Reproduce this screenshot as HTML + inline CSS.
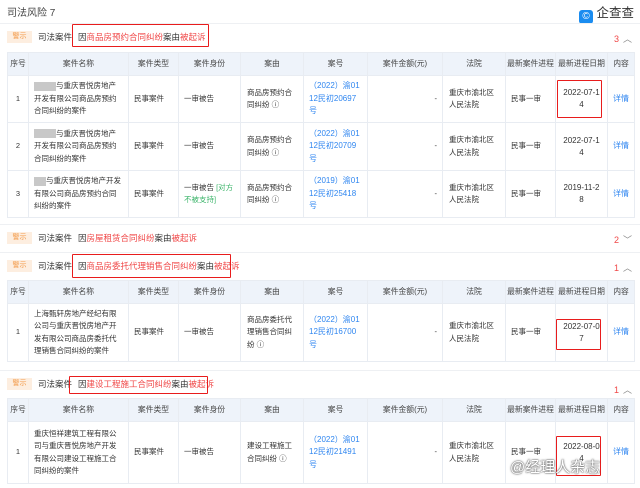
<!DOCTYPE html>
<html><head><meta charset="utf-8"><style>
*{margin:0;padding:0;box-sizing:border-box}
body{width:640px;height:488px;overflow:hidden;background:#fff;font-family:"Liberation Sans","Noto Sans CJK SC",sans-serif;font-size:7.5px;color:#333;position:relative}
.abs{position:absolute}
.sep{position:absolute;left:0;width:640px;height:1px;background:#eef0f3}
.tag{position:absolute;left:7px;width:25px;height:12px;background:#fdeee0;color:#f39b4a;font-size:7px;line-height:12px;text-align:center}
.lbl{position:absolute;left:38px;font-size:8.5px;color:#333}
.red{color:#f04848}
.box{position:absolute;border:1.5px solid #e81c1c;border-radius:1px}
table{position:absolute;left:7px;width:627px;border-collapse:collapse;table-layout:fixed}
td,th{border:1px solid #e8ecf2;font-weight:normal;text-align:center;vertical-align:middle;line-height:12.5px;padding:0 5px;overflow:hidden}
td.w{padding:0 8px 0 6px}
th{background:#eef3fa;color:#444;height:23px;padding:0;white-space:nowrap;font-size:7.8px}
td.l{text-align:left}
td.d{padding:0 7px;line-height:12px;word-break:break-all;font-size:8px}
.b{color:#2f86f0;font-size:8px}
.g{color:#3db56b}
.blur{display:inline-block;width:22px;height:9px;background:#c8c8c8;vertical-align:middle}
.cnt{position:absolute;right:8px;font-size:9px;color:#f04848}
.cnt span{color:#888;margin-left:4px}
</style></head><body>
<div class="abs" style="left:7px;top:4px;font-size:10px;color:#444">司法风险 7</div>
<div class="abs" style="right:6px;top:2px;font-size:12.5px;color:#333;white-space:nowrap"><span style="display:inline-block;width:14px;height:14px;background:#1a8cf0;border-radius:3px;vertical-align:-2px;color:#fff;font-size:10px;text-align:center;line-height:14px">©</span> 企查查</div>
<div class="sep" style="top:23px"></div>

<div class="tag" style="top:31px">警示</div><div class="lbl" style="top:31px">司法案件</div>
<div class="abs" style="left:78px;top:31px;font-size:8.5px">因<span class="red">商品房预约合同纠纷</span>案由<span class="red">被起诉</span></div>
<div class="box" style="left:72px;top:24px;width:137px;height:23px"></div>
<div class="cnt" style="top:32px">3<span>︿</span></div>

<table style="top:52px">
<colgroup><col style="width:21px"><col style="width:100px"><col style="width:50px"><col style="width:62px"><col style="width:63px"><col style="width:64px"><col style="width:75px"><col style="width:63px"><col style="width:50px"><col style="width:52px"><col style="width:27px"></colgroup>
<tr><th>序号</th><th>案件名称</th><th>案件类型</th><th>案件身份</th><th>案由</th><th>案号</th><th>案件金额(元)</th><th>法院</th><th>最新案件进程</th><th>最新进程日期</th><th>内容</th></tr>
<tr style="height:47px"><td>1</td><td class="l"><span class="blur"></span>与重庆晋悦房地产开发有限公司商品房预约合同纠纷的案件</td><td class="l">民事案件</td><td class="l">一审被告</td><td class="l w">商品房预约合同纠纷 ⓘ</td><td class="l b">（2022）渝01 12民初20697号</td><td style="text-align:right">-</td><td class="l w">重庆市渝北区人民法院</td><td class="l">民事一审</td><td class="d">2022-07-14</td><td class="b">详情</td></tr>
<tr style="height:48px"><td>2</td><td class="l"><span class="blur"></span>与重庆晋悦房地产开发有限公司商品房预约合同纠纷的案件</td><td class="l">民事案件</td><td class="l">一审被告</td><td class="l w">商品房预约合同纠纷 ⓘ</td><td class="l b">（2022）渝01 12民初20709号</td><td style="text-align:right">-</td><td class="l w">重庆市渝北区人民法院</td><td class="l">民事一审</td><td class="d">2022-07-14</td><td class="b">详情</td></tr>
<tr style="height:47px"><td>3</td><td class="l"><span class="blur" style="width:12px"></span>与重庆晋悦房地产开发有限公司商品房预约合同纠纷的案件</td><td class="l">民事案件</td><td class="l">一审被告 <span class="g">[对方不被支持]</span></td><td class="l w">商品房预约合同纠纷 ⓘ</td><td class="l b">（2019）渝01 12民初25418号</td><td style="text-align:right">-</td><td class="l w">重庆市渝北区人民法院</td><td class="l">民事一审</td><td class="d">2019-11-28</td><td class="b">详情</td></tr>
</table>
<div class="box" style="left:557px;top:80px;width:45px;height:38px"></div>

<div class="sep" style="top:224px"></div>
<div class="tag" style="top:232px">警示</div><div class="lbl" style="top:232px">司法案件</div>
<div class="abs" style="left:78px;top:232px;font-size:8.5px">因<span class="red">房屋租赁合同纠纷</span>案由<span class="red">被起诉</span></div>
<div class="cnt" style="top:233px">2<span>﹀</span></div>
<div class="sep" style="top:252px"></div>

<div class="tag" style="top:260px">警示</div><div class="lbl" style="top:260px">司法案件</div>
<div class="abs" style="left:78px;top:260px;font-size:8.5px">因<span class="red">商品房委托代理销售合同纠纷</span>案由<span class="red">被起诉</span></div>
<div class="box" style="left:72px;top:254px;width:159px;height:24px"></div>
<div class="cnt" style="top:261px">1<span>︿</span></div>

<table style="top:280px">
<colgroup><col style="width:21px"><col style="width:100px"><col style="width:50px"><col style="width:62px"><col style="width:63px"><col style="width:64px"><col style="width:75px"><col style="width:63px"><col style="width:50px"><col style="width:52px"><col style="width:27px"></colgroup>
<tr><th>序号</th><th>案件名称</th><th>案件类型</th><th>案件身份</th><th>案由</th><th>案号</th><th>案件金额(元)</th><th>法院</th><th>最新案件进程</th><th>最新进程日期</th><th>内容</th></tr>
<tr style="height:58px"><td>1</td><td class="l">上海甄轩房地产经纪有限公司与重庆晋悦房地产开发有限公司商品房委托代理销售合同纠纷的案件</td><td class="l">民事案件</td><td class="l">一审被告</td><td class="l w">商品房委托代理销售合同纠纷 ⓘ</td><td class="l b">（2022）渝01 12民初16700号</td><td style="text-align:right">-</td><td class="l w">重庆市渝北区人民法院</td><td class="l">民事一审</td><td class="d">2022-07-07</td><td class="b">详情</td></tr>
</table>
<div class="box" style="left:556px;top:319px;width:45px;height:31px"></div>

<div class="sep" style="top:370px"></div>
<div class="tag" style="top:378px">警示</div><div class="lbl" style="top:378px">司法案件</div>
<div class="abs" style="left:78px;top:378px;font-size:8.5px">因<span class="red">建设工程施工合同纠纷</span>案由<span class="red">被起诉</span></div>
<div class="box" style="left:69px;top:376px;width:139px;height:18px"></div>
<div class="cnt" style="top:383px">1<span>︿</span></div>

<table style="top:398px">
<colgroup><col style="width:21px"><col style="width:100px"><col style="width:50px"><col style="width:62px"><col style="width:63px"><col style="width:64px"><col style="width:75px"><col style="width:63px"><col style="width:50px"><col style="width:52px"><col style="width:27px"></colgroup>
<tr><th>序号</th><th>案件名称</th><th>案件类型</th><th>案件身份</th><th>案由</th><th>案号</th><th>案件金额(元)</th><th>法院</th><th>最新案件进程</th><th>最新进程日期</th><th>内容</th></tr>
<tr style="height:62px"><td>1</td><td class="l">重庆恒祥建筑工程有限公司与重庆晋悦房地产开发有限公司建设工程施工合同纠纷的案件</td><td class="l">民事案件</td><td class="l">一审被告</td><td class="l w">建设工程施工合同纠纷 ⓘ</td><td class="l b">（2022）渝01 12民初21491号</td><td style="text-align:right">-</td><td class="l w">重庆市渝北区人民法院</td><td class="l">民事一审</td><td class="d">2022-08-04</td><td class="b">详情</td></tr>
</table>
<div class="box" style="left:556px;top:436px;width:45px;height:40px"></div>
<div class="abs" style="left:510px;top:456px;font-size:15px;color:#fff;text-shadow:0 0 2px #555,0 0 1px #333">@经理人杂志</div>
</body></html>
